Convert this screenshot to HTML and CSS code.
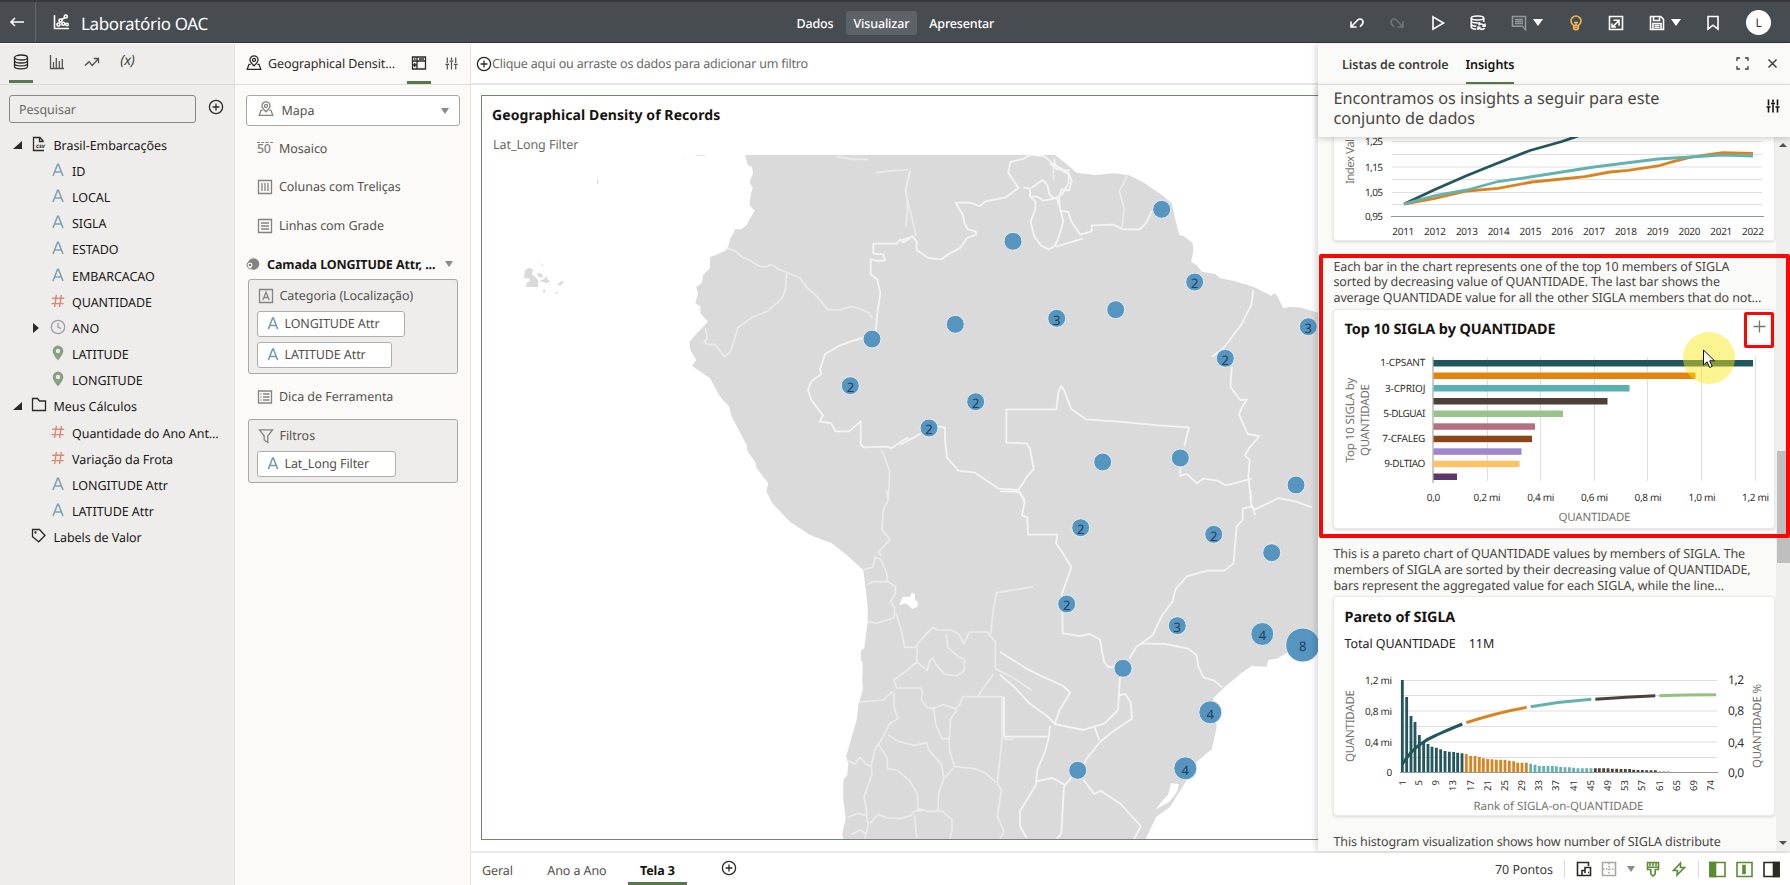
FILE: index.html
```html
<!DOCTYPE html>
<html lang="pt-BR">
<head>
<meta charset="utf-8">
<title>Laboratório OAC</title>
<link rel="stylesheet" href="styles.css">
</head>
<body>
<svg class="sprite" aria-hidden="true">
  <symbol id="i-attr" viewBox="0 0 14 16"><path d="M2 14 6.6 2.2h.8L12 14M3.8 10h6.4"/></symbol>
  <symbol id="i-hash" viewBox="0 0 14 16"><path d="M5.4 1.8 3.6 14M10.4 1.8 8.6 14M1.2 5.2h12M.6 10.6h12"/></symbol>
  <symbol id="i-pin" viewBox="0 0 14 16"><path fill-rule="evenodd" d="M7 .6a5.3 5.3 0 0 1 5.3 5.3C12.300 9 9.200 12.400 7 15.400 4.800 12.400 1.700 9 1.700 5.900A5.300 5.300 0 0 1 7 .6zM7 3.800a2.200 2.200 0 1 0 0 4.400 2.200 2.200 0 0 0 0-4.400z"/></symbol>
  <symbol id="i-clock" viewBox="0 0 16 16"><circle cx="8" cy="8" r="6.700"/><path d="M8 4v4.200l3 1.400"/></symbol>
  <symbol id="i-plus" viewBox="0 0 16 16"><circle cx="8" cy="8" r="6.600"/><path d="M8 4.600v6.800M4.600 8h6.800"/></symbol>
  <symbol id="i-map" viewBox="0 0 16 16"><path d="M8 10.800C5.800 8.600 4 6.900 4 4.900a4 4 0 0 1 8 0c0 2-1.800 3.700-4 5.900z"/><circle cx="8" cy="4.900" r="1.500"/><path d="M4.600 9.400H3L1.200 14.300h13.600L13 9.400h-1.600"/></symbol>
  <symbol id="i-sliders" viewBox="0 0 16 16"><path d="M3.500 1.500v6M3.500 9.500v5M8 1.500v3M8 6.500v8M12.500 1.500v6M12.500 9.500v5M1.500 9h4M6 5.500h4M10.500 9h4"/></symbol>
</svg>

<div class="app">
  <header class="topbar">
    <div class="back"><svg width="16" height="16" viewBox="0 0 16 16"><path d="M15 8H2M6 4 2 8l4 4"/></svg></div>
    <svg class="logo" width="17" height="16" viewBox="0 0 17 16"><path d="M1.500 1v13.500H16"/><circle cx="5.500" cy="10.500" r="1.500"/><circle cx="7.500" cy="6.500" r="1.500"/><circle cx="10.300" cy="9.800" r="1.500"/><circle cx="12.800" cy="2.500" r="1.500"/><circle cx="14" cy="10.500" r="1.300"/><path d="M8.700 5.500 12 3.500"/></svg>
    <h1 class="app-title">Laboratório OAC</h1>
    <nav class="modes"><span class="mode">Dados</span><span class="mode mode-on">Visualizar</span><span class="mode">Apresentar</span></nav>
    <div class="tools">
      <svg width="16" height="16" viewBox="0 0 16 16"><path d="M2 6.500V12h5.500M2 12l6.500-6.800c2-1.900 4.200-1.200 5.200.4.900 1.600.2 3.200-1.400 4.800L11 11.700"/></svg>
      <svg class="dim" width="16" height="16" viewBox="0 0 16 16"><path d="M14 6.500V12H8.500M14 12 7.500 5.200C5.500 3.300 3.300 4 2.300 5.600 1.400 7.200 2.100 8.800 3.700 10.400L5 11.700"/></svg>
      <svg width="16" height="16" viewBox="0 0 16 16"><path d="M3 1.800v12.400L13.500 8z"/></svg>
      <svg width="16" height="16" viewBox="0 0 16 16"><ellipse cx="7.500" cy="3" rx="6.200" ry="2"/><path d="M1.300 3v9c0 1.100 2.200 2 5 2.200M13.700 3v4M1.300 6c0 1.200 2.800 2 6.200 2 1 0 2-.1 2.800-.3M1.300 9c0 1.200 2.200 2 5 2.200M8.500 10.300c1-1.800 4.800-2 5.500.5M15 8.500v2.600h-2.600M14.500 13c-1 1.800-4.600 2-5.500-.5M8 15v-2.600h2.600"/></svg>
      <span class="combo"><svg class="mute" width="16" height="16" viewBox="0 0 16 16"><path d="M1.500 1.500h13v13l-3-3.200h-10zM4 4.500h8M4 6.500h8M4 8.500h8"/></svg><i class="caret"></i></span>
      <svg class="bulb" width="16" height="16" viewBox="0 0 16 16"><path d="M5.700 10.500C3.700 8.800 3 7.600 3 6a5 5 0 0 1 10 0c0 1.600-.7 2.800-2.700 4.500zM5.700 10.500v2.500c0 1 1 1.700 2.300 1.700s2.300-.7 2.300-1.700v-2.500M5.700 12.500h4.600M6 7.500h4M8 7.500v3"/></svg>
      <svg width="16" height="16" viewBox="0 0 16 16"><path d="M1.500 1.500h13v13h-13zM5 11.500l5.500-5.500M5.500 5.200H11v5.500M4 8.500V12h4"/></svg>
      <span class="combo"><svg width="16" height="16" viewBox="0 0 16 16"><path d="M1.500 1.500h10.200l2.800 2.800v10.200h-13zM4.500 1.500v4h6v-4M4 14.500v-6h8v6M5.500 10.500h5M5.500 12.500h5"/></svg><i class="caret"></i></span>
      <svg width="16" height="16" viewBox="0 0 16 16"><path d="M3 1.500h10v12.700l-5-4-5 4z"/></svg>
      <span class="avatar">L</span>
    </div>
  </header>

  <div class="body">
    <aside class="data-panel">
      <div class="ptabs">
        <span class="ptab on"><svg class="dk" width="16" height="16" viewBox="0 0 16 16"><ellipse cx="8" cy="3.500" rx="6.500" ry="2.500"/><path d="M1.500 3.500v9c0 1.400 2.900 2.300 6.500 2.300s6.500-.9 6.500-2.300v-9M1.500 6.500C1.500 7.900 4.400 9 8 9s6.500-1.100 6.500-2.500M1.500 9.500c0 1.400 2.900 2.400 6.500 2.400s6.500-1 6.500-2.400"/></svg></span>
        <span class="ptab"><svg width="16" height="16" viewBox="0 0 16 16"><path d="M1.500 1v13.500H15M4.500 8v6M7.300 4v10M10.300 7v7M13.300 5v9"/></svg></span>
        <span class="ptab"><svg width="16" height="16" viewBox="0 0 16 16"><path d="M1 11.500l4-3.800 3.200 3.800L14 5.200M9.800 4.500h4.700v4.700"/></svg></span>
        <span class="ptab fx">(x)</span>
      </div>
      <div class="search-row"><div class="search">Pesquisar</div><svg class="dk" width="16" height="16"><use href="#i-plus"/></svg></div>
      <div class="tree">
        <div class="row top"><i class="tri open"></i><svg class="dk" width="16" height="16" viewBox="0 0 16 16"><path d="M12.500 5.500 9 1.500H2.500v13H13M8.500 1.500v4h4"/><text x="5" y="12" class="csv">csv</text></svg><span>Brasil-Embarcações</span></div>
        <div class="row"><svg class="attr"><use href="#i-attr"/></svg><span>ID</span></div>
        <div class="row"><svg class="attr"><use href="#i-attr"/></svg><span>LOCAL</span></div>
        <div class="row"><svg class="attr"><use href="#i-attr"/></svg><span>SIGLA</span></div>
        <div class="row"><svg class="attr"><use href="#i-attr"/></svg><span>ESTADO</span></div>
        <div class="row"><svg class="attr"><use href="#i-attr"/></svg><span>EMBARCACAO</span></div>
        <div class="row"><svg class="hash"><use href="#i-hash"/></svg><span>QUANTIDADE</span></div>
        <div class="row time"><i class="tri shut"></i><svg class="clock"><use href="#i-clock"/></svg><span>ANO</span></div>
        <div class="row"><svg class="pin"><use href="#i-pin"/></svg><span>LATITUDE</span></div>
        <div class="row"><svg class="pin"><use href="#i-pin"/></svg><span>LONGITUDE</span></div>
        <div class="row top"><i class="tri open"></i><svg class="dk" width="16" height="16" viewBox="0 0 16 16"><path d="M1.500 13.500v-12h5l2 2.500h6v9.500z"/></svg><span>Meus Cálculos</span></div>
        <div class="row"><svg class="hash"><use href="#i-hash"/></svg><span>Quantidade do Ano Ant…</span></div>
        <div class="row"><svg class="hash"><use href="#i-hash"/></svg><span>Variação da Frota</span></div>
        <div class="row"><svg class="attr"><use href="#i-attr"/></svg><span>LONGITUDE Attr</span></div>
        <div class="row"><svg class="attr"><use href="#i-attr"/></svg><span>LATITUDE Attr</span></div>
        <div class="row top leaf"><svg class="dk" width="16" height="16" viewBox="0 0 16 16"><path d="M1.500 1.500h7l5.500 6-6.300 6.300-6.200-5z"/><circle cx="4.500" cy="4.500" r=".5"/></svg><span>Labels de Valor</span></div>
      </div>
    </aside>

    <aside class="grammar">
      <div class="ghead">
        <svg class="dk" width="16" height="16"><use href="#i-map"/></svg><span class="gtitle">Geographical Densit…</span>
        <span class="ptab on"><svg class="dk" width="16" height="16" viewBox="0 0 16 16"><path d="M1.500 2h13v12h-13zM1.500 6h13M6 2v12M3 4h1.500M8 4h5M3.700 8v4M1.500 10H6"/></svg></span>
        <svg class="sl" width="15" height="15"><use href="#i-sliders"/></svg>
      </div>
      <div class="select"><svg width="16" height="16"><use href="#i-map"/></svg><span>Mapa</span><i class="caret gray"></i></div>
      <div class="slot s1"><span class="fifty">50</span><span>Mosaico</span></div>
      <div class="slot s2"><svg width="16" height="16" viewBox="0 0 16 16"><path d="M1.500 1.500h13v13h-13zM5 4v8M8 4v8M11 4v8"/></svg><span>Colunas com Treliças</span></div>
      <div class="slot s3"><svg width="16" height="16" viewBox="0 0 16 16"><path d="M1.500 1.500h13v13h-13zM4 5h8M4 8h8M4 11h8"/></svg><span>Linhas com Grade</span></div>
      <div class="layer"><svg width="14" height="14" viewBox="0 0 14 14"><circle cx="7.500" cy="7" r="5.800" class="disc"/><path class="lpin" d="M4 12.500C2 10.500 1 9.400 1 8a3 3 0 0 1 6 0c0 1.400-1 2.500-3 4.500z"/><circle cx="4" cy="8" r=".7"/></svg><b>Camada LONGITUDE Attr, ...</b><i class="caret gray"></i></div>
      <div class="group g1">
        <div class="slot"><svg width="16" height="16" viewBox="0 0 16 16"><path d="M1.500 1.500h13v13h-13zM4.800 12 8 4.200 11.200 12M6 9.500h4"/></svg><span>Categoria (Localização)</span></div>
        <div class="pill p1"><svg class="attr"><use href="#i-attr"/></svg>LONGITUDE Attr</div>
        <div class="pill p2"><svg class="attr"><use href="#i-attr"/></svg>LATITUDE Attr</div>
      </div>
      <div class="slot s4"><svg width="16" height="16" viewBox="0 0 16 16"><path d="M1.500 2h13v12h-13zM6 5h6.500M6 8h6.500M6 11h6.500M3.500 5h1M3.500 8h1M3.500 11h1"/></svg><span>Dica de Ferramenta</span></div>
      <div class="group g2">
        <div class="slot"><svg width="16" height="16" viewBox="0 0 16 16"><path d="M1.500 1.800h13L9.800 8v6.500L6.200 12V8z"/></svg><span>Filtros</span></div>
        <div class="pill p3"><svg class="attr"><use href="#i-attr"/></svg>Lat_Long Filter</div>
      </div>
    </aside>

    <div class="stage">
      <div class="upper">
        <main class="canvas-col">
          <div class="filterbar"><svg class="dk" width="16" height="16"><use href="#i-plus"/></svg><span>Clique aqui ou arraste os dados para adicionar um filtro</span></div>
          <section class="viz">
            <h2>Geographical Density of Records</h2>
            <p>Lat_Long Filter</p>
            <svg class="map" width="836" height="684" viewBox="482 155 836 684">
              <path class="land" d="M745 155l2.700 10 4 1.700 1.600 6.300-3.800 9 3.200 6-1.700 5-1.500 12 5.200 6-5 8-3 6-5.700 4.300h-6l-1.500 4-3 4.700-2.200 8.700-3.300 4.300-15 6.300v10.700l-7 7-1 8-5.700 3.700 1.700 6.600-2.700 10 5 3 0 7 7.700 8.400-14.400 15-4 5 .7 8.300 6 10-4.300 6L710 378.300l10 18.400 9.300 10 2.400 10 15 28.300 1 6.700 7.300 10 1.700 6.600 11.600 15-2 8 6 12L790 521.700l20 13.300 21.700 8.300 15 11.700 16.600 15 1.700 13.300 2.700 23.400v15L864.300 648.300l-3.300 2.400v10l1.500 1v15l-.5 2 1 10-4.700 16.300-1.600 15-2.400 8.300-8.300 28.400 2.300 6.600-1 11.700-4 5v20l2.400 18.300-3.400 15 1 6H1145.700l10.300-22.300 14-10L1186.700 780l10-18.300 15-12.400 5-22-3.400-29L1225 686.700l16.700-14 10-6.700 15 .7 1.600-6.700 9-1.500 9.400-5.500L1318 650V312.700l-16.300-5-11.700-1-6.700 1.600-6.600-13.300-3-2-2 3-18.400-9.300-20-6-13.300-2.400-5-4.300-13.300-2.300-5-6.700-5.700-3.300 2.300-10-.6-9-9.400-6.700-4-1-4.300-16.700-3.300-15L1163.300 196l-20-13.700-15-7.300-15-1.700L1095 175l-18.300-2.300-11.700-10-10-7.700z"/>
              <g class="islands" transform="translate(480 140) scale(.33333)">
                <path d="M135 390l14-7 10 6-3 14 8 6 10 12 0 20h-36l2-12 10-6-2-7-16-3zM170 398l16 4 4 10-14-2zM178 422l14-4 8-10 2 10 8 6-10 6zM230 435l16-13 5 5-8 9zM190 450l6 0-2 9-6-2zM222 456l12 1-2 6zM182 372l8 2 0 6zM175 360h3v6zM351 120h4v11h-4zM647 44h28v3h-28zM608 52h3v6zM208 428l4 6-5 0z"/>
              </g>
              <g class="water">
                <path d="M899.300 605l3.400-8.300h7.300l1.700-4 3.300 1.300v6l2.700 1.700v5l-5.400 2.300-4-4-3.300-1.700z"/>
                <path d="M1171 783.300l8 .7-2 8-7.700 9.700-13.300 7.600 6-8 6-6.600z"/>
              </g>
              <g class="b" transform="translate(480 140) scale(.33333)">
                <path d="M740 325l25 7 20 18 22 10 30 18 22 3 15-8 20 14 35 14 30 12 20 28 18 15 30 32 15 20 40 2 30-11 30 8 25 12 10 16M920 402l-4 50-12 25-40 36-45 18-45 32-22 70-18 18-30-38-22 0-10-8 10-10-6-30M1190 98l50-6 45-2M1070 50l50 8 45 0M1288 100l-10 50 5 60-5 50M1205 930l12 30 12 34-4 86"/>
              </g>
              <g class="b w" transform="translate(480 140) scale(.33333)">
                <path d="M1290 295l-20 12-10-8-10 12h-70v30l30 2 5 18-25 2-18-6v46l20 16 9 40-9 60-6 68M1148 594l-28 8-40 14-45 27-15 45 4 14-30 22-10 26 10 30 35 46-10 18 35 6 12 24h42l34-30v70l10 8 70-2 12 5 36-24 15-8"/>
              </g>
              <g class="b w" transform="translate(900 140) scale(.33333)">
                <path d="M0 302l38-12 12 14 0 26 35 24 40 4 18-14 40-22 18-28 28-10-2-10-24-6-10-20-4-22-22-38 42 0 30 10 18-14 60-12 38-28-30-46 6-32 40-10 20-12 44 6 24 22 46 26 10 24-8 30-22-4-8 24 4 40 24 4 8 26 28 42 34-10 0-18 64-2 30 14 50 0 20-20 16-34M370 142l20 4 0 24 16 14 0 24-14 36 10 44 20 28 24 12 18-10 12-26 14-48-10-40-10-30-40 8-18-12-18 0M394 144l34-24 14 14 6 28 14 14 24-12 20-36 0-26-38-20-6-26M468 320l80-24M450 70l20 18 40 4M0 915l40-22 22-12M115 860l20 2 0 40 6 50 34 40 50 6 72 48 58 4 26-40 20-22-6-36-6-28-10-14-60-2 0-100h150l6-50 8-20 10 14 20 54 44 32 90 6 130 12 90 6-14 56M841 980l0 28 20-6 30 28 18-14 44 6 24 14 48-12 30-8M357 1054l18 26"/>
                <path d="M1060 450l-6 44-30 60-44 58-16 18-28 20M996 680l-5 60 30 40 20-2-14 22-10 24 26 58 36 6-30 34-14 24 14 14-4 50 8 74"/>
              </g>
              <g class="b" transform="translate(900 140) scale(.33333)">
                <path d="M682 108l-24 46 14 50-6 66M30 92l-14 60 22 90 10 46M460 80l0 40"/>
              </g>
              <g class="b" transform="translate(680 490) scale(.33333)">
                <path d="M620 0l4 30-14 30-4 60 24 28-34 38 8 12M1060 290l-72 12-38 6-10 50-8 74"/>
                <path d="M548 240l30-8 8-30 16 6 18 40 2 26 24 16 0 20-14 24 12 20-2 30-54 16-26-6M562 284l20-10 40 2M648 370l16 50 10 52 34 0 8-16 36-38 8-6 12 8 40 0 24 12 16 30 16-36 54 0 24 30 0 80 48 24 60 40M712 472l-2 44-28 24-40 30 8 24 72 0 6 14-4 22 16 22 18 4 30-12 20 6 18 6 12-10 10-26h118l0 130-14 130 12 20-12 80 20 44-14 26M710 516l18 14 14 12 6-28 10-10 10 20 26 28 34 6 24-14 2-36-20-8-30-28-6-40M940 552l-48 68M642 606l0 44 12 36-26 16-22 44-20 30-12 48 2 30-24 66 6 30 6 60-10 38M536 636l74-6 28-26M624 734l30 20 50 12 36-8 8 24 36 40 8 42-16 46-2 52M594 760l28 46 0 30 30 4 38 34 22 38 2 44 30 8 44 0 14 14 14 10 0 32-8 40M570 1000l24-26 30 10 36 2 34-10 10-14 20 0M704 976l6 70M500 810l24 12 16-20 20 22 12 4M504 982l30-12 24 6M514 1034l26-14 22 14M760 650l8 56 18 40 22 0 4-60 20-28M806 746l4 40 14 44 60 6 34 14 28 26M820 834l-24 28M972 748h30"/>
              </g>
              <g class="b w" transform="translate(1000 490) scale(.33333)">
                <path d="M0 4l58 2 16 30-8 40 16 6 2 52h88l-4 26 16 22 30 50-28 80 2 118 50 8 30-6 32 16 12 68 14 16 40-6M388 506l20-34 50-36 28-60 32-42 8-36 36-40 60-16h52l26-22 4-40 6-70 18-20 0-34 24-6 14 8 70-34 50 10 50 18M752 0l0 36 14 40M425 460l70 2 70 14 24 18 6 36 16 32 32 10 24 20M360 560l-6 100-40 40-64 20-86-18 14-40 32-54-20-20-70-32-40-20-80-50M164 702l-18-20-60-44-40-44-46-40M356 616l20-4 16 24 4 50-60 40-36 30-40 50-16 34M250 868l32 44 20-10 60 40 60 66-20 40M214 862l-22 28-8 140-16 20M284 712l14 38M150 708l-4 36-12 44-22 50-4 46-48 80 0 44 20 36M110 874l48-10 36 20M12 620v120h130"/>
              </g>
              <g class="pins">
                <g class="dots">
                  <circle cx="872" cy="339" r="9"/><circle cx="850.300" cy="385.700" r="9"/><circle cx="1161.700" cy="209.300" r="9"/><circle cx="1013" cy="241.300" r="9"/><circle cx="1194.700" cy="282" r="9"/><circle cx="1056.700" cy="318.300" r="9"/><circle cx="1115.700" cy="309.700" r="9"/><circle cx="955.300" cy="324.300" r="9"/><circle cx="1308.300" cy="326.700" r="9"/><circle cx="1225.300" cy="358.300" r="9"/><circle cx="975.700" cy="401.700" r="9"/><circle cx="929" cy="428" r="9"/><circle cx="1102.700" cy="462" r="9"/><circle cx="1180.300" cy="458" r="9"/><circle cx="1296" cy="485" r="9"/><circle cx="1080.700" cy="527.700" r="9"/><circle cx="1213.700" cy="534.300" r="9"/><circle cx="1271.700" cy="552.700" r="9"/><circle cx="1066.700" cy="604" r="9"/><circle cx="1177.300" cy="625.700" r="9"/><circle cx="1262.300" cy="634" r="11.500"/><circle cx="1302.700" cy="645" r="17"/><circle cx="1123" cy="668.300" r="9"/><circle cx="1210.300" cy="712.300" r="11.500"/><circle cx="1185.300" cy="768.300" r="11.500"/><circle cx="1077.700" cy="770.300" r="9"/>
                </g>
                <g class="nums">
                  <text x="850.500" y="391.500">2</text><text x="1194.700" y="288">2</text><text x="1056.700" y="324.500">3</text><text x="1308.300" y="333">3</text><text x="1225.300" y="364.500">2</text><text x="975.700" y="407.500">2</text><text x="929" y="434">2</text><text x="1080.700" y="533.500">2</text><text x="1213.700" y="540.500">2</text><text x="1066.700" y="610">2</text><text x="1177.300" y="632">3</text><text x="1262.500" y="640">4</text><text x="1302.700" y="651">8</text><text x="1210.300" y="718.500">4</text><text x="1185.300" y="774.500">4</text>
                </g>
              </g>
            </svg>
          </section>
        </main>

        <aside class="insights">
          <div class="itabs"><span class="itab a">Listas de controle</span><span class="itab b2">Insights</span>
            <svg class="exp" width="15" height="15" viewBox="0 0 15 15"><path d="M2 5V2h3M10 2h3v3M13 10v3h-3M5 13H2v-3"/></svg>
            <svg class="cls" width="11" height="11" viewBox="0 0 11 11"><path d="M1.500 1.500l8 8M9.500 1.500l-8 8"/></svg></div>
          <div class="ihead"><p>Encontramos os insights a seguir para este<br>conjunto de dados</p><svg width="16" height="16"><use href="#i-sliders"/></svg></div>
          <div class="iscroll">
            <div class="ilist">
              <div class="card c1">
                <svg width="441" height="103" viewBox="0 0 441 103">
                  <path class="grid" d="M59 4.500h370M59 17.500h370M59 30h370M59 42.500h370M59 55.500h370M59 67.500h370"/><path class="axis" d="M58 79.500h373"/>
                  <g class="tick"><text x="32" y="8" textLength="18">1,25</text><text x="32" y="33.500" textLength="18">1,15</text><text x="32" y="58.500" textLength="18">1,05</text><text x="32" y="83" textLength="18">0,95</text></g>
                  <g class="tick mid"><text x="70.300" y="97.500" textLength="22">2011</text><text x="102.100" y="97.500" textLength="22">2012</text><text x="133.900" y="97.500" textLength="22">2013</text><text x="165.700" y="97.500" textLength="22">2014</text><text x="197.500" y="97.500" textLength="22">2015</text><text x="229.300" y="97.500" textLength="22">2016</text><text x="261.100" y="97.500" textLength="22">2017</text><text x="292.900" y="97.500" textLength="22">2018</text><text x="324.700" y="97.500" textLength="22">2019</text><text x="356.500" y="97.500" textLength="22">2020</text><text x="388.300" y="97.500" textLength="22">2021</text><text x="420" y="97.500" textLength="22">2022</text></g>
                  <text class="axt" transform="translate(20.500 47) rotate(-90)" textLength="45">Index Val</text>
                  <g class="lines"><path class="teal" d="M71 67l31-14.500 32-14 31-12.500 32-12.500 32-9 19-6.500"/><path class="orange" d="M71 67L102 61.300 134 54 165 51.300 199 45 229 42 252 39.700 277 35 295 33.300 325 29 340 24.700 357 20.300 377 17.300 390 15.700 420 16.300"/><path class="aqua" d="M71 67l31-8.500 32-5.500 31-8.500 32-4.500 32-5 32-5 32-4 32-4 32-2 32-1.800 31 .8"/></g>
                </svg>
              </div>
              <p class="desc">Each bar in the chart represents one of the top 10 members of SIGLA<br>sorted by decreasing value of QUANTIDADE. The last bar shows the<br>average QUANTIDADE value for all the other SIGLA members that do not…</p>
              <div class="card c2">
                <div class="ctop"><h3>Top 10 SIGLA by QUANTIDADE</h3><svg width="13" height="13" viewBox="0 0 13 13"><path d="M6.500 .5v12M.5 6.500h12"/></svg></div>
                <svg width="441" height="175" viewBox="0 0 441 175">
                  <path class="grid" d="M154.500 4v124M207.500 4v124M261.500 4v124M314.500 4v124M368.500 4v124M422.500 4v124"/><path class="axis" d="M100 4v126"/>
                  <g class="bars"><rect class="f1" x="100.500" y="7" width="319.500" height="6.500"/><rect class="f2" x="100.500" y="19.500" width="262" height="6.500"/><rect class="f3" x="100.500" y="32" width="196" height="6.500"/><rect class="f4" x="100.500" y="45" width="174" height="6.500"/><rect class="f5" x="100.500" y="57.500" width="129.500" height="6.500"/><rect class="f6" x="100.500" y="70.300" width="101.500" height="6.500"/><rect class="f7" x="100.500" y="82.700" width="98.500" height="6.500"/><rect class="f8" x="100.500" y="95.300" width="88" height="6.500"/><rect class="f9" x="100.500" y="107.700" width="86" height="6.500"/><rect class="f10" x="100.500" y="120.500" width="23.500" height="6.500"/></g>
                  <g class="tick"><text x="47.300" y="13" textLength="45">1-CPSANT</text><text x="52" y="38.500" textLength="40.500">3-CPRIOJ</text><text x="50.300" y="63.500" textLength="42">5-DLGUAI</text><text x="49.300" y="89" textLength="43">7-CFALEG</text><text x="51.300" y="114" textLength="41">9-DLTIAO</text></g>
                  <g class="tick mid"><text x="100.500" y="147.500" textLength="13.500">0,0</text><text x="154" y="147.500" textLength="27">0,2 mi</text><text x="207.800" y="147.500" textLength="27">0,4 mi</text><text x="261.500" y="147.500" textLength="27">0,6 mi</text><text x="315" y="147.500" textLength="27">0,8 mi</text><text x="369" y="147.500" textLength="27">1,0 mi</text><text x="422.500" y="147.500" textLength="27">1,2 mi</text></g>
                  <text class="axt mid" x="261.500" y="168" textLength="72">QUANTIDADE</text>
                  <text class="axt mid" transform="translate(21 67) rotate(-90)" textLength="85">Top 10 SIGLA by</text>
                  <text class="axt mid" transform="translate(36 67) rotate(-90)" textLength="72">QUANTIDADE</text>
                </svg>
              </div>
              <p class="desc">This is a pareto chart of QUANTIDADE values by members of SIGLA. The<br>members of SIGLA are sorted by their decreasing value of QUANTIDADE,<br>bars represent the aggregated value for each SIGLA, while the line…</p>
              <div class="card c3">
                <div class="ctop"><h3>Pareto of SIGLA</h3></div>
                <p class="total"><span>Total QUANTIDADE</span><span>11M</span></p>
                <svg width="441" height="155" viewBox="0 0 441 155">
                  <path class="grid" d="M68 20.500h316M68 35.500h316M68 51h316M68 66.500h316M68 82h316M68 97.500h316"/>
                  <g transform="translate(-23 -121) scale(.33333)">
                    <g class="pb">
                      <path class="teal" d="M277 700V423M290 700V474M303 700V531M315 700V549M328 700V588M341 700V612M354 700V615M366 700V623M379 700V626M392 700V631M405 700V636M418 700V638M431 700V639M443 700V641M456 700V643"/>
                      <path class="orange" d="M469 700V645M482 700V651M495 700V651M508 700V654M520 700V658M533 700V660M546 700V661M559 700V662M572 700V662M585 700V662M598 700V665M611 700V667M623 700V671M636 700V671M649 700V671"/>
                      <path class="aqua" d="M662 700V674M675 700V677M688 700V681M701 700V681M714 700V681M727 700V681M739 700V682M752 700V684M765 700V685M778 700V685M791 700V686M804 700V688M817 700V688M830 700V688M843 700V688"/>
                      <path class="brown" d="M856 700V688M868 700V688M881 700V688M894 700V688M907 700V689M920 700V689M933 700V690M946 700V690M959 700V690M971 700V692M984 700V693M997 700V693M1010 700V694M1023 700V694M1036 700V694"/>
                      <path class="green" d="M1049 700V697M1062 700V697M1075 700V697"/>
                    </g>
                    <g class="pl">
                      <path class="teal" d="M277 676Q300 640 325 620T380 588Q415 572 457 555"/><path class="orange" d="M469 551Q560 521 650 505"/><path class="aqua" d="M662 503Q750 488 844 481"/><path class="brown" d="M856 481Q950 473 1036 470"/><path class="green" d="M1048 470Q1140 467 1218 467"/>
                    </g>
                  </g>
                  <path class="axis" d="M67 112.500h318"/>
                  <g class="tick"><text x="32" y="23.500" textLength="27">1,2 mi</text><text x="32" y="54.500" textLength="27">0,8 mi</text><text x="32" y="85.500" textLength="27">0,4 mi</text><text x="53.500" y="116" textLength="5.500">0</text></g>
                  <g class="tick big"><text x="395" y="24" textLength="16">1,2</text><text x="395" y="55" textLength="16">0,8</text><text x="395" y="86.500" textLength="16">0,4</text><text x="395" y="117" textLength="16">0,0</text></g>
                  <g class="tick end vert"><text transform="translate(72.500 120) rotate(-90)">1</text><text transform="translate(89 120) rotate(-90)">5</text><text transform="translate(106 120) rotate(-90)">9</text><text transform="translate(123 120) rotate(-90)">13</text><text transform="translate(140.500 120) rotate(-90)">17</text><text transform="translate(157.500 120) rotate(-90)">21</text><text transform="translate(175 120) rotate(-90)">25</text><text transform="translate(192 120) rotate(-90)">29</text><text transform="translate(209 120) rotate(-90)">33</text><text transform="translate(226 120) rotate(-90)">37</text><text transform="translate(244 120) rotate(-90)">41</text><text transform="translate(260.500 120) rotate(-90)">45</text><text transform="translate(278 120) rotate(-90)">49</text><text transform="translate(295 120) rotate(-90)">53</text><text transform="translate(312 120) rotate(-90)">57</text><text transform="translate(329.500 120) rotate(-90)">61</text><text transform="translate(346.500 120) rotate(-90)">65</text><text transform="translate(364 120) rotate(-90)">69</text><text transform="translate(381 120) rotate(-90)">74</text></g>
                  <text class="axt mid" x="225.500" y="150" textLength="170">Rank of SIGLA-on-QUANTIDADE</text>
                  <text class="axt mid" transform="translate(21 66) rotate(-90)" textLength="72">QUANTIDADE</text>
                  <text class="axt mid" transform="translate(428 66) rotate(-90)" textLength="84">QUANTIDADE %</text>
                </svg>
              </div>
              <p class="desc">This histogram visualization shows how number of SIGLA distribute</p>
            </div>
            <div class="sbar"><i class="up"></i><i class="thumb"></i><i class="down"></i></div>
          </div>
        </aside>
      </div>

      <footer class="footer">
        <div class="sheets"><span class="sheet">Geral</span><span class="sheet">Ano a Ano</span><span class="sheet on">Tela 3</span></div>
        <svg class="dk addsheet" width="16" height="16"><use href="#i-plus"/></svg>
        <div class="status">
          <span class="pts">70 Pontos</span><i class="sep"></i>
          <svg class="dk" width="16" height="16" viewBox="0 0 16 16"><path d="M6 14.500H1.500v-13h11V5M6 14.500v-5h3v-3h5.500v8zM9 9.500V12M12 11.500h1"/></svg>
          <svg class="lt" width="16" height="16" viewBox="0 0 16 16"><path d="M1.500 1.500h13v13h-13z"/><path class="dash" d="M8 2v12M2 8h12"/></svg>
          <i class="caret gray"></i>
          <svg class="gr" width="16" height="16" viewBox="0 0 16 16"><path d="M2.500 1.500h11v7h-3.300V13L8 15l-2.200-2V8.500H2.500zM5 1.500v3.500M8 1.500v3.500M11 1.500v3.500M2.500 6.300h11"/></svg>
          <svg class="gr bolt" width="16" height="16" viewBox="0 0 16 16"><path d="M9.500 2 2.500 9.500h4L6 14l7.500-7.500h-4z"/></svg>
          <i class="sep"></i>
          <svg class="gr" width="17" height="17" viewBox="0 0 17 17"><path d="M1 1.500h15v14H1z"/><path class="fill" d="M1 1.500h5.500v14H1z"/></svg>
          <svg class="gr" width="17" height="17" viewBox="0 0 17 17"><path d="M1 1.500h15v14H1z"/><path class="fill" d="M7 4.500h2v8H7z"/></svg>
          <svg class="dk" width="17" height="17" viewBox="0 0 17 17"><path d="M1 1.500h15v14H1z"/><path class="fill" d="M10.500 1.500H16v14h-5.500z"/></svg>
        </div>
      </footer>
    </div>
  </div>

  <div class="mark-big"></div>
  <div class="mark-small"></div>
  <div class="halo"></div>
  <svg class="cursor" width="14" height="21" viewBox="0 0 14 21"><path d="M1.500 1v15l3.600-3.200 2.500 5.700 2.600-1.200-2.500-5.500h4.800z"/></svg>
</div>
</body>
</html>
```
FILE: styles.css
```css
* { box-sizing: border-box; }
body { margin: 0; font-family: "Noto Sans", "Open Sans", sans-serif; font-size: 12.5px; letter-spacing: -.05px; color: #26231f; background: #fff; overflow: hidden; text-rendering: geometricPrecision; }
h1, h2, h3, p { margin: 0; font-weight: 400; }
svg { fill: none; stroke: currentColor; stroke-width: 1.3; flex: none; display: block; }
svg text { stroke: none; fill: currentColor; letter-spacing: 0; }
.sprite { position: absolute; width: 0; height: 0; }
.app { position: relative; width: 1790px; height: 885px; display: flex; flex-direction: column; overflow: hidden; }

.topbar { height: 43px; background: #474c51; border-top: 2px solid #37383b; border-bottom: 1px solid #303234; color: #fff; display: flex; align-items: center; flex: none; }
.topbar svg { stroke-width: 1.6; }
.back { width: 36px; height: 40px; border-right: 1px solid #62676b; display: grid; place-items: center; padding-right: 2px; }
.logo { margin-left: 17px; }
.app-title { font-size: 17px; margin-left: 11px; padding-top: 2px; letter-spacing: -.35px; width: 200px; white-space: nowrap; }
.modes { display: flex; margin-left: 508px; gap: 5px; padding-top: 1px; }
.mode { padding: 1px 7.500px 0; height: 24px; line-height: 23px; border-radius: 3px; font-weight: 500; letter-spacing: -.15px; }
.mode-on { background: #5d6266; }
.tools { margin-left: auto; padding: 1px 19px 0 0; display: flex; align-items: center; gap: 24.600px; }
.combo { display: flex; align-items: center; gap: 6px; }
.caret { display: block; width: 0; height: 0; border: 5px solid transparent; border-top: 7px solid #fff; border-bottom: 0; flex: none; }
.caret.gray { border-width: 6px 4.500px 0; border-top-color: #8b8a88; }
.dim { opacity: .22; } .mute { color: #93979a; } .bulb { color: #f0b851; }
.avatar { width: 25px; height: 25px; border-radius: 50%; background: #fff; color: #33373a; font-size: 12px; display: grid; place-items: center; }

.body { flex: 1; display: flex; min-height: 0; padding-top: 1px; }
.dk { color: #2c2a27; }
.data-panel { width: 234px; background: #eeedec; }
.ptabs { height: 41px; border-bottom: 1px solid #dcdbd9; display: flex; padding-left: 9px; gap: 11.500px; }
.ptab { width: 24px; height: 39px; display: grid; place-items: center; color: #55524e; border-bottom: 3px solid transparent; }
.ptab.on { border-bottom-color: #56794b; }
.fx { font-style: italic; font-size: 14px; color: #403d3a; padding-bottom: 3px; }
.search-row { display: flex; padding: 10px 0 0 9px; gap: 12px; }
.search-row svg { margin-top: 4px; }
.search { width: 187px; height: 28px; border: 1px solid #8a8886; border-radius: 3px; line-height: 27px; padding-left: 9px; color: #6b6966; }
.tree { padding-top: 9px; }
.row { height: 26.200px; display: flex; align-items: center; padding-left: 49.500px; gap: 6.500px; white-space: nowrap; color: #1b1916; }
.row > svg { width: 16px; height: 16px; margin-top: -3px; }
.row.top { padding-left: 12.500px; }
.row.top.leaf { padding-left: 31px; }
.row.time { padding-left: 33px; gap: 0; }
.row.time svg { margin: -3px 6.500px 0 10.500px; }
.tri { display: block; width: 0; height: 0; flex: none; }
.tri.open { border-left: 9px solid transparent; border-bottom: 8px solid #2c2a27; margin-right: 3px; margin-top: -1px; }
.tri.shut { border-left: 6px solid #2c2a27; border-top: 5px solid transparent; border-bottom: 5px solid transparent; margin-top: -1px; }
.attr { color: #7ea3b3; width: 16px; height: 16px; stroke-width: 1.6; }
.hash { color: #d98975; stroke-width: 1.4; }
.pin { fill: #85a17e; stroke: none; }
.clock { color: #a09ba8; }
.csv { font-size: 6px; font-style: italic; font-weight: 700; }

.grammar { width: 237px; background: #fbfaf8; border-left: 1px solid #e2e1df; border-right: 1px solid #e4e3e1; color: #55524e; }
.ghead { height: 41px; border-bottom: 1px solid #dedddb; display: flex; align-items: center; padding-left: 11px; color: #2c2a27; }
.ghead > svg, .gtitle { margin-top: -2px; }
.gtitle { margin-left: 6px; width: 139px; white-space: nowrap; letter-spacing: -.1px; }
.ghead .ptab { margin-top: 1px; }
.ghead > .sl { margin-left: 13px; color: #55524e; }
.select { margin: 10px 0 0 10.500px; width: 214px; height: 31px; border: 1px solid #aaa8a5; border-radius: 3px; background: #fff; display: flex; align-items: center; padding: 0 10px 0 11px; }
.select svg { margin-top: -3px; }
.select span { margin-left: 8px; flex: 1; }
.slot { display: flex; align-items: center; gap: 6px; height: 20px; padding-left: 22px; white-space: nowrap; }
.slot svg, .select svg { color: #86837f; }
.s1 { margin-top: 12px; } .s2 { margin-top: 18.500px; } .s3 { margin-top: 19px; } .s4 { margin-top: 12.500px; }
.fifty { width: 16px; font-size: 12.500px; line-height: 12px; color: #86837f; border-top: 1px dashed #86837f; letter-spacing: -.5px; font-weight: 500; }
.layer { display: flex; align-items: center; height: 20px; margin-top: 18.500px; padding-left: 11px; color: #86837f; }
.layer b { color: #1b1916; margin-left: 7px; width: 178px; white-space: nowrap; letter-spacing: -.1px; }
.disc { fill: #86837f; stroke: none; } .lpin { fill: #fbfaf8; stroke-width: 1; }
.group { margin-left: 12.500px; width: 210px; border: 1px solid #a9a8a5; border-radius: 3px; background: #eeedec; }
.g1 { height: 95.500px; margin-top: 4.500px; padding-top: 6px; }
.g2 { height: 64.500px; margin-top: 12px; padding-top: 6px; }
.group .slot { padding-left: 9px; }
.pill { margin: 5.500px 0 0 8.500px; height: 25.500px; border: 1px solid #b0aeab; border-radius: 3px; background: #fff; display: flex; align-items: center; padding-left: 7px; gap: 3.500px; white-space: nowrap; letter-spacing: -.1px; }
.pill svg { height: 15px; color: #6f9cb0; }
.p1 { width: 148px; } .p2 { width: 135px; } .p3 { width: 139px; }

.stage { flex: 1; display: flex; flex-direction: column; min-width: 0; }
.upper { flex: 1; display: flex; min-height: 0; }
.canvas-col { width: 847px; flex: none; }
.filterbar { height: 41px; border-bottom: 2px solid #e6e6e5; display: flex; align-items: center; padding-left: 5px; color: #6b6966; letter-spacing: -.19px; white-space: nowrap; }
.viz { margin: 10px 0 0 10px; width: 837px; height: 745px; border: 1px solid #74866f; border-right: 0; overflow: hidden; }
.viz h2 { font-size: 14px; font-weight: 700; line-height: 20px; padding: 10px 0 0 10px; color: #161310; letter-spacing: .08px; }
.viz p { line-height: 18px; padding: 10px 0 0 11px; color: #6b6966; }
.map { margin-top: 1px; }
.land, .islands { fill: #dadada; stroke: none; }
.water { fill: #fff; stroke: none; }
.b { stroke: #ebebeb; stroke-width: 5; stroke-linejoin: round; }
.b.w { stroke: #f4f4f4; stroke-width: 5.500; }
.dots { fill: #5595bf; stroke: #e4eef5; stroke-width: 1; }
.nums { font-size: 13px; text-anchor: middle; color: #23415a; }

.insights { width: 472px; background: #fafaf8; box-shadow: -3px 0 5px rgba(0,0,0,.13); display: flex; flex-direction: column; position: relative; }
.itabs { height: 41px; border-bottom: 1px solid #e0dfdd; display: flex; align-items: center; padding-left: 24px; flex: none; color: #403d3a; font-weight: 600; }
.itab { height: 39px; line-height: 39px; border-bottom: 2px solid transparent; white-space: nowrap; }
.itab.a { width: 107px; } .itab.b2 { margin-left: 16.500px; width: 48.500px; color: #161310; border-color: #56794b; }
.exp { margin-left: 221px; margin-top: -2px; } .cls { margin-left: 16.500px; margin-top: -2px; stroke-width: 1.5; }
.ihead { height: 52px; flex: none; display: flex; padding: 2.500px 9px 0 15.500px; box-shadow: 0 2px 6px rgba(0,0,0,.18); position: relative; z-index: 1; background: #fafaf8; justify-content: space-between; }
.ihead p { font-size: 16.300px; line-height: 20.500px; color: #4a4743; white-space: nowrap; }
.ihead svg { margin-top: 10.500px; stroke-width: 1.6; color: #161310; }
.iscroll { flex: 1; display: flex; min-height: 0; overflow: hidden; }
.ilist { width: 458px; padding-left: 14.500px; }
.card { width: 442px; background: #fff; border: 1px solid #eceae8; border-radius: 4px; box-shadow: 0 1px 3px rgba(0,0,0,.14); overflow: hidden; }
.card > svg { margin-left: -1px; }
.c1 { height: 104px; border-top: 0; border-radius: 0 0 4px 4px; }
.c2, .c3 { height: 220px; }
.desc { line-height: 15.900px; height: 50px; margin-top: 17.500px; margin-left: 1px; white-space: nowrap; color: #4a4743; letter-spacing: -.12px; }
.ctop { display: flex; justify-content: space-between; padding: 10.500px 8px 0 11px; height: 43px; }
.ctop h3 { font-size: 14.400px; font-weight: 700; line-height: 20px; color: #161310; }
.ctop svg { color: #77746f; }
.total { display: flex; gap: 13px; padding-left: 11px; line-height: 18px; margin-top: -5px; height: 25px; }
.grid { stroke: #dfdfdf; stroke-width: 1; } .axis { stroke: #8d9a95; stroke-width: 1; }
.tick { font-size: 10px; color: #33302c; } .mid { text-anchor: middle; } .end { text-anchor: end; } .big { font-size: 12px; }
.vert { font-size: 9.500px; }
.axt { font-size: 11.500px; color: #77746f; }
.lines path { stroke-width: 2.800; }
.pb path { stroke-width: 8.500; } .pl path { stroke-width: 9; }
.teal { stroke: #24565e; } .orange { stroke: #da8420; } .aqua { stroke: #62b2b2; } .brown { stroke: #4a403c; } .green { stroke: #97bf85; }
.bars { stroke: none; }
.f1 { fill: #22565f; } .f2 { fill: #e6830d; } .f3 { fill: #59b0b1; } .f4 { fill: #4c4038; } .f5 { fill: #9ac38b; } .f6 { fill: #b37180; } .f7 { fill: #8b4518; } .f8 { fill: #9f86cd; } .f9 { fill: #fdc265; } .f10 { fill: #5a3a6c; }
.sbar { width: 14px; background: #efefee; display: flex; flex-direction: column; align-items: center; }
.up, .down { display: block; border: 4px solid transparent; }
.up { border-bottom: 4px solid #55524e; border-top: 0; margin-top: 6px; }
.thumb { display: block; width: 13px; height: 112px; background: #bfbfbf; margin-top: 304px; }
.down { border-top: 4px solid #55524e; border-bottom: 0; margin-top: 278px; }

.footer { height: 34px; border-top: 2px solid #ebebea; display: flex; flex: none; background: #fff; }
.sheets { display: flex; padding-left: 2px; }
.sheet { padding: 0 9px; height: 32px; line-height: 35px; color: #55524e; margin-right: 16.500px; white-space: nowrap; letter-spacing: -.1px; }
.sheet.on { padding: 0 12px; font-weight: 700; color: #161310; border-bottom: 3px solid #56794b; margin: -0px 0 0 -4px; }
.addsheet { margin: 7px 0 0 34px; }
.status { margin-left: auto; padding-right: 10px; display: flex; align-items: center; gap: 9.800px; }
.pts { white-space: nowrap; color: #403d3a; }
.sep { width: 1px; height: 18px; background: #dcdbd9; margin: 0 1px; }
.lt { color: #a9a7a4; } .dash { stroke-dasharray: 1.500 1.500; } .gr { color: #5c8a31; } .fill { fill: currentColor; }
.status svg { stroke-width: 1.6; }

.mark-big { position: absolute; left: 1319px; top: 254px; width: 471px; height: 284px; border: 4px solid #fb0505; border-radius: 2px; }
.mark-small { position: absolute; left: 1744px; top: 312px; width: 30px; height: 36px; border: 3px solid #fb0505; border-radius: 2px; }
.halo { position: absolute; left: 1683px; top: 332px; width: 52px; height: 52px; border-radius: 50%; background: rgba(248,232,20,.47); }
.cursor { position: absolute; left: 1702px; top: 349px; fill: #fff; stroke: #111; stroke-width: 1; }
```
